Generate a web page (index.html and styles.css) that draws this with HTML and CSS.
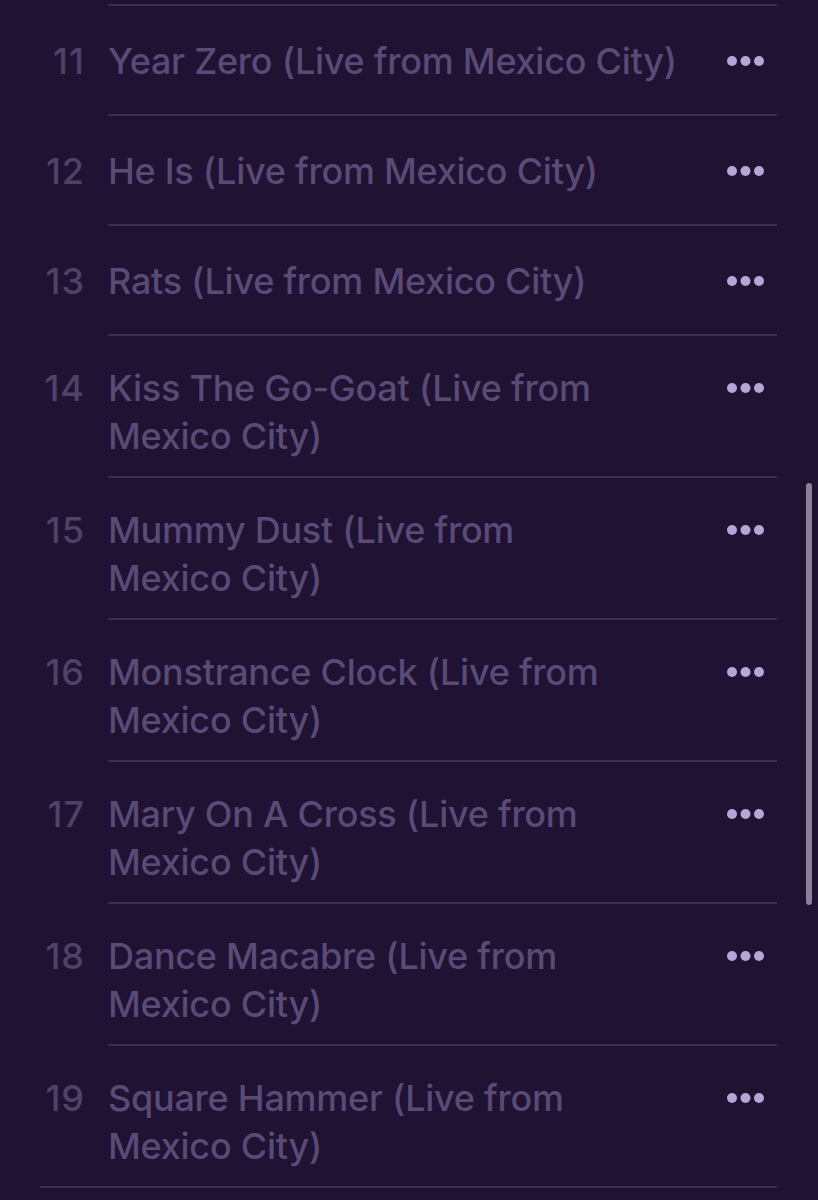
FILE: index.html
```html
<!DOCTYPE html>
<html lang="en">
<head>
    <meta charset="UTF-8">
    <meta name="viewport" content="width=device-width, initial-scale=1.0">
    <title>Tracks</title>
    <link rel="stylesheet" href="styles.css">
</head>
<body>
    <div class="tracklist">
        <div class="track">
            <div class="track-num">11</div>
            <div class="track-main">
                <div class="track-title">Year Zero (Live from Mexico City)</div>
                <div class="track-more"><svg width="40" height="10" viewBox="0 0 40 10"><circle cx="5" cy="5" r="5"/><circle cx="18.5" cy="5" r="5"/><circle cx="32" cy="5" r="5"/></svg></div>
            </div>
        </div>
        <div class="track">
            <div class="track-num">12</div>
            <div class="track-main">
                <div class="track-title">He Is (Live from Mexico City)</div>
                <div class="track-more"><svg width="40" height="10" viewBox="0 0 40 10"><circle cx="5" cy="5" r="5"/><circle cx="18.5" cy="5" r="5"/><circle cx="32" cy="5" r="5"/></svg></div>
            </div>
        </div>
        <div class="track">
            <div class="track-num">13</div>
            <div class="track-main">
                <div class="track-title">Rats (Live from Mexico City)</div>
                <div class="track-more"><svg width="40" height="10" viewBox="0 0 40 10"><circle cx="5" cy="5" r="5"/><circle cx="18.5" cy="5" r="5"/><circle cx="32" cy="5" r="5"/></svg></div>
            </div>
        </div>
        <div class="track long">
            <div class="track-num">14</div>
            <div class="track-main">
                <div class="track-title">Kiss The Go-Goat (Live from Mexico City)</div>
                <div class="track-more"><svg width="40" height="10" viewBox="0 0 40 10"><circle cx="5" cy="5" r="5"/><circle cx="18.5" cy="5" r="5"/><circle cx="32" cy="5" r="5"/></svg></div>
            </div>
        </div>
        <div class="track long">
            <div class="track-num">15</div>
            <div class="track-main">
                <div class="track-title">Mummy Dust (Live from Mexico City)</div>
                <div class="track-more"><svg width="40" height="10" viewBox="0 0 40 10"><circle cx="5" cy="5" r="5"/><circle cx="18.5" cy="5" r="5"/><circle cx="32" cy="5" r="5"/></svg></div>
            </div>
        </div>
        <div class="track long">
            <div class="track-num">16</div>
            <div class="track-main">
                <div class="track-title">Monstrance Clock (Live from Mexico City)</div>
                <div class="track-more"><svg width="40" height="10" viewBox="0 0 40 10"><circle cx="5" cy="5" r="5"/><circle cx="18.5" cy="5" r="5"/><circle cx="32" cy="5" r="5"/></svg></div>
            </div>
        </div>
        <div class="track long">
            <div class="track-num">17</div>
            <div class="track-main">
                <div class="track-title">Mary On A Cross (Live from Mexico City)</div>
                <div class="track-more"><svg width="40" height="10" viewBox="0 0 40 10"><circle cx="5" cy="5" r="5"/><circle cx="18.5" cy="5" r="5"/><circle cx="32" cy="5" r="5"/></svg></div>
            </div>
        </div>
        <div class="track long">
            <div class="track-num">18</div>
            <div class="track-main">
                <div class="track-title">Dance Macabre (Live from Mexico City)</div>
                <div class="track-more"><svg width="40" height="10" viewBox="0 0 40 10"><circle cx="5" cy="5" r="5"/><circle cx="18.5" cy="5" r="5"/><circle cx="32" cy="5" r="5"/></svg></div>
            </div>
        </div>
        <div class="track long">
            <div class="track-num">19</div>
            <div class="track-main">
                <div class="track-title">Square Hammer (Live from Mexico City)</div>
                <div class="track-more"><svg width="40" height="10" viewBox="0 0 40 10"><circle cx="5" cy="5" r="5"/><circle cx="18.5" cy="5" r="5"/><circle cx="32" cy="5" r="5"/></svg></div>
            </div>
        </div>
        <div class="tracklist-end"></div>
    </div>
    <div class="scrollbar"></div>
</body>
</html>
```

FILE: styles.css
```css
body {
    margin: 0;
    background-color: #1f1233;
    font-family: Inter, "Noto Sans", sans-serif;
    height: 1200px;
    overflow: hidden;
    position: relative;
}
.tracklist {
    padding: 4px 41px 0 40px;
}
.track {
    display: flex;
}
.track-num {
    width: 45px;
    flex-shrink: 0;
    margin-right: 23px;
    text-align: right;
    font-size: 36px;
    line-height: 48px;
    font-weight: 500;
    letter-spacing: 1px;
    color: #4e4367;
    padding-top: 33px;
}
.track-main {
    flex: 1;
    display: flex;
    align-items: flex-start;
    border-top: 2px solid #3a2e51;
    padding: 31px 0 29px;
}
.track.long .track-num {
    padding-top: 30px;
}
.track.long .track-main {
    padding: 28px 0 16px;
}
.track-title {
    flex: 1;
    font-size: 36px;
    line-height: 48px;
    font-weight: 500;
    color: #594a76;
    letter-spacing: -0.25px;
    text-wrap: pretty;
}
.track-more {
    width: 94px;
    height: 48px;
    flex-shrink: 0;
    display: flex;
    align-items: center;
    justify-content: flex-end;
    padding-right: 10px;
    box-sizing: border-box;
}
.track-more svg {
    fill: #b6a5d6;
}
.tracklist-end {
    border-top: 2px solid #3a2e51;
}
.scrollbar {
    position: absolute;
    left: 806px;
    top: 483px;
    width: 6px;
    height: 422px;
    border-radius: 3px;
    background-color: #8a8197;
}
```
